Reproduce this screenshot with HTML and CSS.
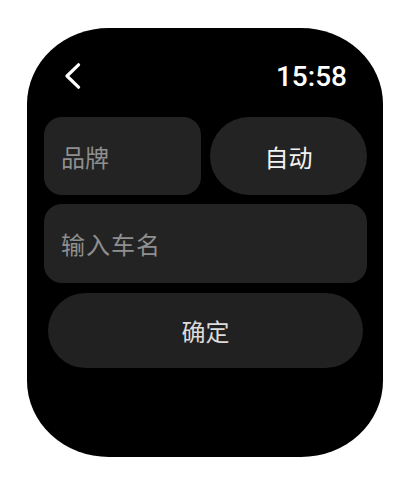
FILE: index.html
```html
<!DOCTYPE html>
<html lang="zh">
<head>
<meta charset="utf-8">
<title>Watch</title>
<link rel="stylesheet" href="styles.css">
</head>
<body>
<div class="screen">
  <div class="header">
    <svg class="back" width="17" height="26" viewBox="0 0 17 26" aria-hidden="true">
      <path d="M14.5 1.8 L3 13 L14.5 24.2" fill="none" stroke="#fff" stroke-width="3.2" stroke-linecap="round" stroke-linejoin="round"/>
    </svg>
    <span class="time">15:58</span>
  </div>
  <div class="form">
    <div class="row">
      <div class="field brand">品牌</div>
      <div class="pill auto">自动</div>
    </div>
    <div class="field name">输入车名</div>
    <div class="pill confirm">确定</div>
  </div>
</div>
</body>
</html>
```

FILE: styles.css
```css
html, body {
  margin: 0;
  padding: 0;
  background: #ffffff;
}

body {
  width: 411px;
  height: 503px;
  padding: 28px 0 0 27px;
  box-sizing: border-box;
  font-family: "Noto Sans CJK SC", "Noto Sans", sans-serif;
}

.screen {
  width: 356px;
  height: 429px;
  background: #000000;
  border-radius: 82px / 76px;
  padding: 0 16px 0 17px;
  box-sizing: border-box;
}

.header {
  height: 89px;
  box-sizing: border-box;
  padding: 36px 20px 0 20px;
  display: flex;
  justify-content: space-between;
  align-items: flex-start;
}

.back {
  display: block;
  margin-top: -1px;
}

.time {
  font-family: Roboto, "Liberation Sans", sans-serif;
  font-weight: 500;
  font-size: 28px;
  line-height: 28px;
  color: #ffffff;
  margin-top: -1px;
}

.form {
  display: flex;
  flex-direction: column;
  gap: 9px;
}

.row {
  display: flex;
  gap: 9px;
}

.field {
  background: #232323;
  border-radius: 18px;
  color: #8f8f8f;
  font-size: 24px;
  display: flex;
  align-items: center;
  padding-left: 17px;
  box-sizing: border-box;
}

.brand {
  width: 157px;
  height: 78px;
}

.name {
  height: 79px;
  letter-spacing: 1px;
}

.pill {
  background: #232323;
  border-radius: 40px;
  font-size: 24px;
  display: flex;
  align-items: center;
  justify-content: center;
  box-sizing: border-box;
}

.auto {
  flex: 1;
  height: 78px;
  color: #f2f2f2;
}

.confirm {
  height: 75px;
  margin: 1px 4px 0 4px;
  background: #212121;
  color: #dcdcdc;
}
```
